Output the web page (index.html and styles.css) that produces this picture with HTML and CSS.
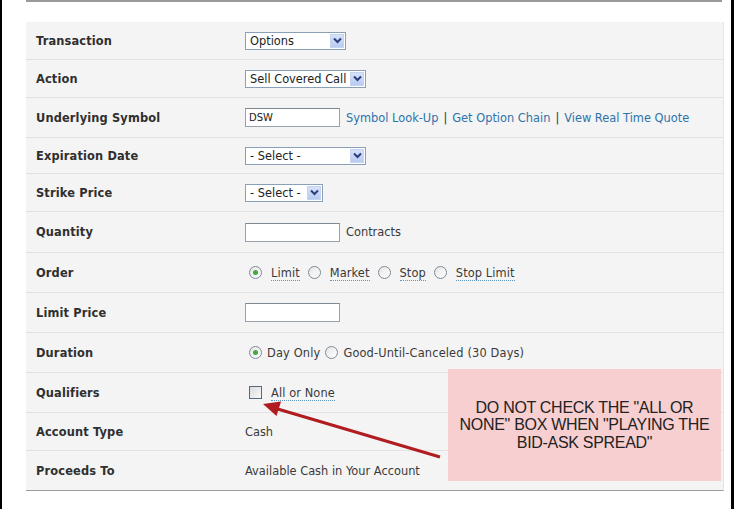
FILE: index.html
```html
<!DOCTYPE html>
<html>
<head>
<meta charset="utf-8">
<link rel="stylesheet" href="styles.css">
</head>
<body>
<div class="page">
  <div class="topline"></div>
  <div class="panel">
    <div class="row"><div class="label">Transaction</div><div class="value"><div class="select w100"><span class="stext">Options</span><span class="sbtn"><svg width="9" height="7" viewBox="0 0 9 7"><path d="M1 1.5 L4.5 5 L8 1.5" fill="none" stroke="#2b3f7a" stroke-width="2"/></svg></span></div></div></div>
    <div class="row"><div class="label">Action</div><div class="value"><div class="select w121"><span class="stext">Sell Covered Call</span><span class="sbtn"><svg width="9" height="7" viewBox="0 0 9 7"><path d="M1 1.5 L4.5 5 L8 1.5" fill="none" stroke="#2b3f7a" stroke-width="2"/></svg></span></div></div></div>
    <div class="row"><div class="label">Underlying Symbol</div><div class="value"><div class="input"><span class="itext">DSW</span></div><a class="link">Symbol Look-Up</a><span class="sep">|</span><a class="link">Get Option Chain</a><span class="sep">|</span><a class="link">View Real Time Quote</a></div></div>
    <div class="row"><div class="label">Expiration Date</div><div class="value"><div class="select w121"><span class="stext">- Select -</span><span class="sbtn"><svg width="9" height="7" viewBox="0 0 9 7"><path d="M1 1.5 L4.5 5 L8 1.5" fill="none" stroke="#2b3f7a" stroke-width="2"/></svg></span></div></div></div>
    <div class="row"><div class="label">Strike Price</div><div class="value"><div class="select w78"><span class="stext">- Select -</span><span class="sbtn"><svg width="9" height="7" viewBox="0 0 9 7"><path d="M1 1.5 L4.5 5 L8 1.5" fill="none" stroke="#2b3f7a" stroke-width="2"/></svg></span></div></div></div>
    <div class="row"><div class="label">Quantity</div><div class="value"><div class="input"></div><span class="plain">Contracts</span></div></div>
    <div class="row"><div class="label">Order</div><div class="value opts"><span class="radio on"></span><span class="dotted">Limit</span><span class="radio"></span><span class="dotted">Market</span><span class="radio"></span><span class="dotted">Stop</span><span class="radio"></span><span class="dotted">Stop Limit</span></div></div>
    <div class="row"><div class="label">Limit Price</div><div class="value"><div class="input"></div></div></div>
    <div class="row"><div class="label">Duration</div><div class="value opts"><span class="radio on"></span><span class="plainopt">Day Only</span><span class="radio"></span><span class="plainopt">Good-Until-Canceled (30 Days)</span></div></div>
    <div class="row"><div class="label">Qualifiers</div><div class="value opts"><span class="check"></span><span class="dotted">All or None</span></div></div>
    <div class="row"><div class="label">Account Type</div><div class="value"><span class="plain0">Cash</span></div></div>
    <div class="row"><div class="label">Proceeds To</div><div class="value"><span class="plain0">Available Cash in Your Account</span></div></div>
  </div>
  <div class="callout">DO NOT CHECK THE "ALL OR<br>NONE" BOX WHEN "PLAYING THE<br>BID-ASK SPREAD"</div>
  <svg class="arrow" width="734" height="509" viewBox="0 0 734 509">
    <line x1="440" y1="457" x2="276" y2="408.5" stroke="#b01c1f" stroke-width="3"/>
    <polygon points="263,404 281,401.5 276.5,416" fill="#b01c1f"/>
  </svg>
</div>
</body>
</html>
```
FILE: styles.css
```css
html, body { margin: 0; padding: 0; background: #fff; }
body { width: 734px; height: 509px; overflow: hidden; }
.page {
  position: relative;
  height: 509px;
  border-left: 2px solid #000;
  border-right: 3px solid #000;
  box-sizing: border-box;
  width: 734px;
  padding-left: 24px;
  font-family: "DejaVu Sans", Verdana, sans-serif;
  font-size: 11.4px;
  color: #333;
}
.topline {
  width: 696px;
  height: 2px;
  background: #9a9a9a;
  margin-bottom: 20px;
}
.panel {
  width: 697px;
  background: #f4f4f4;
  border-right: 1px solid #e4e4e4;
  border-bottom: 1px solid #9c9c9c;
}
.row {
  display: flex;
  align-items: center;
  height: 39px;
  box-sizing: border-box;
  border-bottom: 1px solid #e2e2e2;
}
.row:nth-child(1), .row:nth-child(2) { height: 38px; }
.row:nth-child(3) { height: 40px; }
.row:nth-child(4) { height: 36px; }
.row:nth-child(5) { height: 38px; }
.row:nth-child(6) { height: 41px; }
.row:nth-child(7), .row:nth-child(8), .row:nth-child(9), .row:nth-child(10) { height: 40px; }
.row:nth-child(11) { height: 38px; }
.row:last-child { border-bottom: none; }
.label {
  width: 209px;
  padding-left: 10px;
  font-weight: bold;
  color: #2f2f2f;
  letter-spacing: 0.15px;
}
.value {
  display: flex;
  align-items: center;
  color: #3a3a3a;
}
.select {
  display: flex;
  align-items: center;
  justify-content: space-between;
  height: 18px;
  box-sizing: border-box;
  border: 1px solid #8aa0b8;
  background: #fff;
  padding: 0 1px 0 4px;
}
.w100 { width: 101px; }
.w121 { width: 121px; }
.w78 { width: 78px; }
.stext { color: #222; }
.sbtn {
  width: 14px;
  height: 14px;
  background: linear-gradient(#d6e2fb, #b9cbf2);
  border: 1px solid #c6d4ef;
  box-sizing: border-box;
  display: flex;
  align-items: center;
  justify-content: center;
}
.input {
  width: 95px;
  height: 19px;
  box-sizing: border-box;
  border: 1px solid #98a2ac;
  border-top-color: #7e8891;
  background: #fff;
  padding: 0 3px;
  display: flex;
  align-items: center;
}
.itext { font-size: 10px; color: #222; }
.link { color: #2d73aa; margin-left: 6px; }
.sep { color: #333; margin-left: 5px; margin-right: -1px; }
.plain { margin-left: 6px; }
.opts { padding-left: 4px; }
.radio {
  width: 13px;
  height: 13px;
  box-sizing: border-box;
  border: 1px solid #7d8b97;
  border-radius: 50%;
  background: linear-gradient(135deg, #e6e6e6, #fff);
  display: inline-flex;
  align-items: center;
  justify-content: center;
  margin-right: 9px;
}
.radio.on::after {
  content: "";
  width: 5px;
  height: 5px;
  border-radius: 50%;
  background: #43a843;
}
.dotted {
  border-bottom: 1px dotted #5d95c0;
  line-height: 13px;
  margin-right: 8px;
  padding-top: 2px;
  letter-spacing: 0.1px;
}
.plainopt { margin-right: 5px; margin-left: -4px; letter-spacing: 0.15px; }
.check {
  width: 13px;
  height: 13px;
  box-sizing: border-box;
  border: 1px solid #56697b;
  background: linear-gradient(135deg, #dcdcdc, #f8f8f8);
  margin-right: 9px;
}
.callout {
  position: absolute;
  left: 446px;
  top: 369px;
  width: 273px;
  height: 112px;
  box-sizing: border-box;
  background: #f7cfd0;
  display: flex;
  align-items: center;
  justify-content: center;
  text-align: center;
  font-family: "Liberation Sans", Arial, sans-serif;
  font-size: 16px;
  line-height: 17.5px;
  color: #222;
  letter-spacing: -0.3px;
  white-space: nowrap;
}
.arrow { position: absolute; left: -2px; top: 0; pointer-events: none; }
```
